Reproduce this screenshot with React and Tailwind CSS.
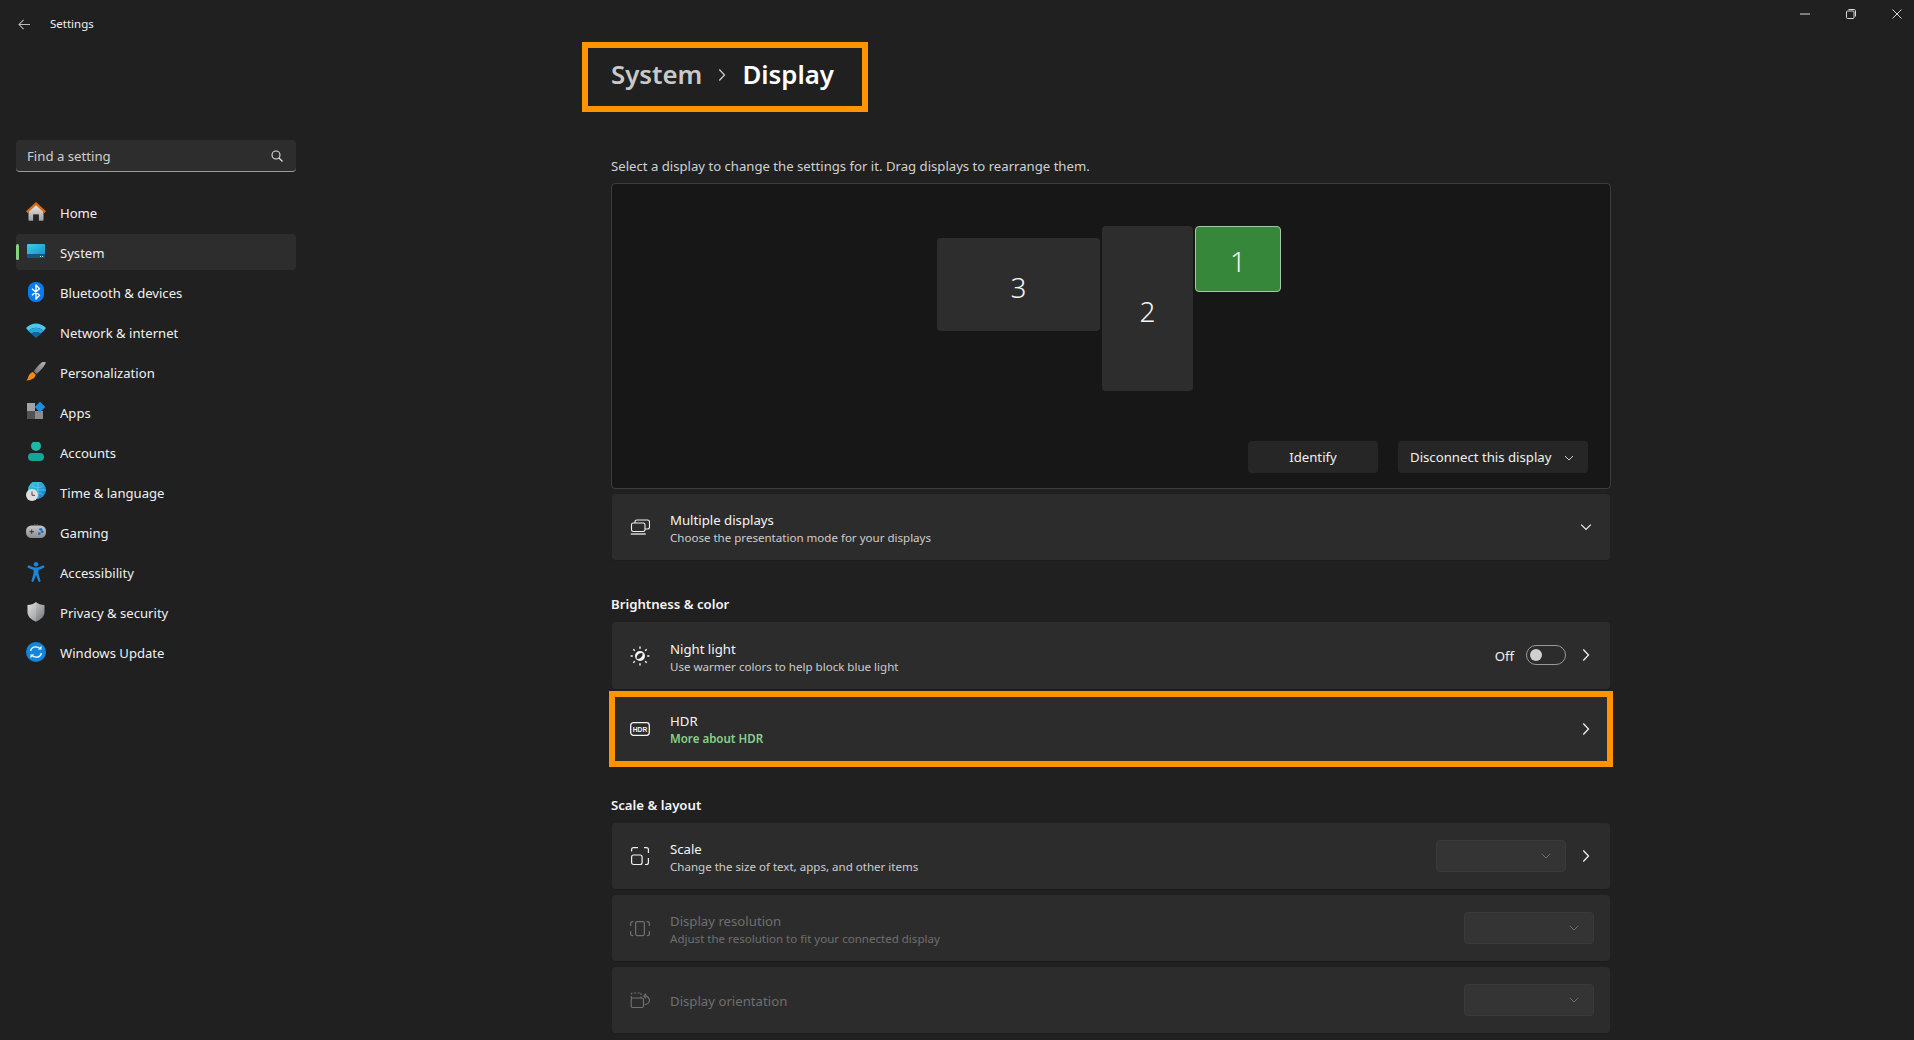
import React from "react";

const nav = [
  ["Home", HomeIcon],
  ["System", SystemIcon],
  ["Bluetooth & devices", BluetoothIcon],
  ["Network & internet", WifiIcon],
  ["Personalization", BrushIcon],
  ["Apps", AppsIcon],
  ["Accounts", AccountIcon],
  ["Time & language", TimeIcon],
  ["Gaming", GameIcon],
  ["Accessibility", AccessIcon],
  ["Privacy & security", ShieldIcon],
  ["Windows Update", UpdateIcon],
];

function Svg({ children, className = "w-5 h-5", vb = "0 0 20 20" }) {
  return (
    <svg viewBox={vb} className={className} fill="none">
      {children}
    </svg>
  );
}

function HomeIcon() {
  return (
    <Svg>
      <defs>
        <linearGradient id="hb" x1="0" y1="0" x2="0" y2="1">
          <stop offset="0" stopColor="#ececec" />
          <stop offset="1" stopColor="#9f9f9f" />
        </linearGradient>
      </defs>
      <path d="M2.500 8.500 10 2l7.500 6.500v9.300a1 1 0 0 1-1 1h-3.700v-6.300H7.200v6.300H3.500a1 1 0 0 1-1-1z" fill="url(#hb)" />
      <path d="M7.200 12.500h5.600v6.300H7.200z" fill="#2a2a2a" opacity=".55" />
      <path d="M0 9.200 10 0l10 9.200-1.500 1.700L10 3.200 1.500 10.900z" fill="#dc6a10" />
    </Svg>
  );
}
function SystemIcon() {
  return (
    <Svg>
      <defs>
        <linearGradient id="sb" x1="0" y1="0" x2="1" y2="1">
          <stop offset="0" stopColor="#38cfe8" />
          <stop offset="1" stopColor="#1a90c8" />
        </linearGradient>
      </defs>
      <rect x="1" y="2" width="18" height="11" rx="1" fill="url(#sb)" />
      <path d="M1 12h18v3a1 1 0 0 1-1 1H2a1 1 0 0 1-1-1z" fill="#14597d" />
      <rect x="14" y="14" width="1" height="1" fill="#bfe6f5" />
      <rect x="16" y="14" width="1" height="1" fill="#bfe6f5" />
    </Svg>
  );
}
function BluetoothIcon() {
  return (
    <Svg>
      <rect x="2" y="0" width="16" height="20" rx="7.500" fill="#0a7bf0" />
      <path d="M6 6.700 13.500 13.300 10 17V3l3.500 3.700L6 13.300" stroke="#fff" strokeWidth="1.400" strokeLinejoin="round" />
    </Svg>
  );
}
function WifiIcon() {
  return (
    <Svg>
      <path d="M0 6C5.500 0 14.500 0 20 6L17.500 9C13 4.800 7 4.800 2.500 9z" fill="#4cc8f0" />
      <path d="M2.500 9C7 4.800 13 4.800 17.500 9L14.800 11.800C12 9.500 8 9.500 5.200 11.800z" fill="#2aa4de" />
      <path d="M5.200 11.800C8 9.500 12 9.500 14.800 11.800L10 16z" fill="#11659f" />
    </Svg>
  );
}
function BrushIcon() {
  return (
    <Svg vb="0 1 20 20">
      <defs>
        <linearGradient id="br" x1="0" y1="1" x2="1" y2="0">
          <stop offset="0" stopColor="#707070" />
          <stop offset="1" stopColor="#b8b8b8" />
        </linearGradient>
      </defs>
      <path d="M17.300.300c1.200-.5 2.700.6 2.300 1.900-1.500 3.500-5.800 8-9 10.800L7.700 10.200C10.500 6.800 14 2 17.300.300z" fill="url(#br)" />
      <path d="M7 11 9.800 13.700c-.6 3-3.500 5.500-9.800 5.800 1.700-1 2-3 2.700-4.800C3.500 13 5 11.500 7 11z" fill="#f28a18" />
    </Svg>
  );
}
function AppsIcon() {
  return (
    <Svg>
      <rect x="1" y="1" width="8" height="8" fill="#a2a2a6" />
      <rect x="1" y="9" width="8" height="8" fill="#505155" />
      <rect x="9" y="9" width="8" height="8" fill="#8a8b8f" />
      <path d="M14 -.3 19.300 5 14 10.300 8.700 5z" fill="#1a8fe3" />
    </Svg>
  );
}
function AccountIcon() {
  return (
    <Svg>
      <circle cx="10" cy="4" r="5" fill="#1fb5a8" />
      <rect x="2" y="11" width="16" height="8" rx="4" fill="#14a598" />
    </Svg>
  );
}
function TimeIcon() {
  return (
    <Svg>
      <defs>
        <linearGradient id="gl" x1="0" y1="0" x2="1" y2="1">
          <stop offset="0" stopColor="#3fd2e0" />
          <stop offset="1" stopColor="#1379c9" />
        </linearGradient>
      </defs>
      <circle cx="11" cy="8" r="9" fill="url(#gl)" />
      <path d="M3 8h17M12 0v17M6 3.500c3 3 8 3 11 0M7 13c3-2.500 7-2.500 10 0" stroke="#8adfee" strokeWidth=".5" />
      <circle cx="6" cy="13" r="6" fill="#dedede" />
      <path d="M6 9.500v3.800h3" stroke="#444" strokeWidth="1" />
    </Svg>
  );
}
function GameIcon() {
  return (
    <Svg>
      <defs>
        <linearGradient id="gm" x1="0" y1="0" x2="0" y2="1">
          <stop offset="0" stopColor="#c5c6c9" />
          <stop offset="1" stopColor="#8b8c91" />
        </linearGradient>
      </defs>
      <rect x="0" y="3.500" width="20" height="12.500" rx="5.500" fill="url(#gm)" />
      <path d="M3.500 9.700h4.500M5.700 7.500v4.400" stroke="#333" strokeWidth="1" />
      <circle cx="14.700" cy="7.300" r="1.400" fill="#1a70c4" />
      <circle cx="16.200" cy="9.700" r="1.400" fill="#1a70c4" />
      <circle cx="13.300" cy="11.700" r="1.400" fill="#1a70c4" />
      <path d="M8.500 2.500h.8M10.700 2.500h.8" stroke="#777" />
    </Svg>
  );
}
function AccessIcon() {
  return (
    <Svg>
      <circle cx="10" cy="2.300" r="2.200" fill="#1b86de" />
      <path d="M2 3.800c-1.200 1 .2 2.200 1 2.400L7.600 8v3.500L5.500 18.500c-.3 1.500 1.700 2 2.200.6L10 13l2.300 6.100c.5 1.400 2.500.9 2.200-.6l-2.100-7V8l4.600-1.800c.8-.2 2.200-1.400 1-2.400-1-.8-2.200.2-3.500.7C12.800 5.200 11.500 5.500 10 5.500S7.200 5.200 5.500 4.500C4.200 4 3 3 2 3.800z" fill="#1b86de" />
    </Svg>
  );
}
function ShieldIcon() {
  return (
    <Svg>
      <defs>
        <linearGradient id="sh" x1="0" y1="0" x2="1" y2="1">
          <stop offset="0" stopColor="#dadadb" />
          <stop offset=".5" stopColor="#a9aaad" />
          <stop offset="1" stopColor="#6f7074" />
        </linearGradient>
      </defs>
      <path d="M10 0c2 2 5 3 8.500 3v7c0 4.500-3.500 7.500-8.500 9.700C5 17.500 1.500 14.500 1.500 10V3C5 3 8 2 10 0z" fill="url(#sh)" />
      <path d="M10 0v19.700C5 17.500 1.500 14.500 1.500 10V3C5 3 8 2 10 0z" fill="#fff" opacity=".15" />
    </Svg>
  );
}
function UpdateIcon() {
  return (
    <Svg>
      <circle cx="10" cy="10" r="10" fill="#1285de" />
      <path d="M4.500 9c.6-2.700 2.800-4.200 5.500-4.200 1.800 0 3.200.7 4.300 2" stroke="#fff" strokeWidth="1.300" />
      <path d="M15.500 3.800v3.700h-3.700z" fill="#fff" />
      <path d="M15.500 11c-.6 2.700-2.800 4.200-5.500 4.200-1.800 0-3.200-.7-4.300-2" stroke="#fff" strokeWidth="1.300" />
      <path d="M4.500 16.200v-3.700h3.700z" fill="#fff" />
    </Svg>
  );
}

function Chevron({ className = "" }) {
  return (
    <svg viewBox="0 0 8 14" className={`w-2 h-3.5 ${className}`} fill="none">
      <path d="M1.300 1.500 6.500 7l-5.200 5.500" stroke="currentColor" strokeWidth="1.300" />
    </svg>
  );
}
function Down({ className = "" }) {
  return (
    <svg viewBox="0 0 10 6" className={`w-2.5 h-1.5 ${className}`} fill="none">
      <path d="M1 1l4 4 4-4" stroke="currentColor" strokeWidth="1" />
    </svg>
  );
}

function MultiIcon() {
  return (
    <Svg>
      <path d="M5 6V5c0-1.200.8-2 2-2h10.500c1.200 0 2 .8 2 2v5c0 1.200-.8 2-2 2H15" stroke="#f0f0f0" strokeWidth="1.100" />
      <rect x="1.500" y="6" width="13.500" height="8.500" rx="1.700" stroke="#f0f0f0" strokeWidth="1.100" />
      <path d="M.8 17h15" stroke="#f0f0f0" strokeWidth="1.300" />
    </Svg>
  );
}
function SunIcon() {
  return (
    <Svg>
      <circle cx="10" cy="10" r="5" fill="#f4f4f4" />
      <path d="M6.800 12.800c2.800.8 6-1.600 5.800-5.200-.3-.3-.6-.5-1-.6-3 .1-5.400 2.800-4.800 5.800z" fill="#2c2c2c" />
      <path d="M10 .6v2.200M10 17.200v2.200M.6 10h2.200M17.200 10h2.200M3.300 3.300l1.500 1.500M15.200 15.200l1.500 1.500M3.300 16.700l1.500-1.500M15.200 4.800l1.500-1.500" stroke="#f4f4f4" strokeWidth="1.400" />
    </Svg>
  );
}
function HdrIcon() {
  return (
    <svg viewBox="0 0 20 14" className="w-5 h-3.5" fill="none">
      <rect x=".7" y=".7" width="18.600" height="12.600" rx="2.700" stroke="#f4f4f4" strokeWidth="1.300" />
      <text x="10" y="9.800" textAnchor="middle" fill="#f4f4f4" fontFamily="'Liberation Sans', sans-serif" fontWeight="700" fontSize="7.500" textLength="14.500" lengthAdjust="spacingAndGlyphs">
        HDR
      </text>
    </svg>
  );
}
function ScaleIcon() {
  return (
    <Svg>
      <rect x="1.600" y="9" width="10.500" height="9.500" rx="2" stroke="#f0f0f0" strokeWidth="1.200" />
      <path d="M1.600 5.500V3.600c0-1.200.8-2 2-2H8M14 1.600h2.400c1.200 0 2 .8 2 2V7M18.400 12v4.500c0 1.200-.8 2-2 2H15" stroke="#f0f0f0" strokeWidth="1.200" />
    </Svg>
  );
}
function ResIcon() {
  return (
    <Svg>
      <rect x="5.600" y="3.600" width="8.800" height="14" rx="1.800" stroke="#707070" strokeWidth="1.200" />
      <path d="M3.200 3.600h-.7C1.300 3.600.6 4.300.6 5.500V8M.6 13v2.700c0 1.200.7 1.900 1.900 1.900h.7M16.800 3.600h.7c1.200 0 1.900.7 1.900 1.900V8M19.400 13v2.700c0 1.200-.7 1.900-1.900 1.900h-.7" stroke="#707070" strokeWidth="1.200" />
    </Svg>
  );
}
function OrientIcon() {
  return (
    <Svg>
      <path d="M1.200 8V4.500c0-1 .5-1.500 1.500-1.500H11M11 3v5" stroke="#707070" strokeWidth="1.200" strokeDasharray="2 1.500" />
      <rect x="1.200" y="8" width="12.300" height="9.500" rx="1.500" stroke="#707070" strokeWidth="1.200" />
      <path d="M14 6c3-.4 5.400 1.400 5.400 4.200S17 14.500 14.500 14.500" stroke="#707070" strokeWidth="1.200" />
      <path d="M16.200 3.800 13.800 6l2.400 2.200" stroke="#707070" strokeWidth="1.200" />
    </Svg>
  );
}

function RowText({ title, sub, disabled, link, pad = "pt-[3px]" }) {
  return (
    <div className={`flex flex-col ml-5 ${pad}`}>
      <span className={`text-[13.2px] leading-[18px] ${disabled ? "text-[#6f6f6f]" : "text-[#f5f5f5]"}`}>{title}</span>
      {sub && (
        <span
          className={`text-[11.55px] leading-[18px] ${
            link ? "text-[#8ad08a] font-semibold" : disabled ? "text-[#6f6f6f]" : "text-[#cdcdcd]"
          }`}
        >
          {sub}
        </span>
      )}
    </div>
  );
}

function Row({ icon, children, right, className = "" }) {
  return (
    <div className={`h-[67px] rounded bg-[#2c2c2c] border-b border-[#1c1c1c] flex items-center pl-[18px] ${className}`}>
      {icon}
      {children}
      <div className="ml-auto flex items-center">{right}</div>
    </div>
  );
}

function Select({ className = "" }) {
  return (
    <div className={`w-[130px] h-8 rounded bg-[#343434] border border-[#3a3a3a] flex items-center justify-end pr-[14px] text-[#6d6d6d] ${className}`}>
      <Down />
    </div>
  );
}

function Monitor({ n, className, active }) {
  return (
    <div
      className={`absolute rounded flex items-center justify-center text-[28px] font-light text-[#f5f5f5] ${
        active ? "bg-[#36873a] border border-[#a5c9a6]" : "bg-[#2d2d2d]"
      } ${className}`}
    >
      {n}
    </div>
  );
}

export default function App() {
  return (
    <div className="relative flex h-[1040px] w-full overflow-hidden bg-[#202020] font-['Noto_Sans',sans-serif] text-[#f2f2f2]">
      <aside className="w-[280px] ml-4 shrink-0 flex flex-col">
        <div className="h-[48px] flex items-center">
          <svg viewBox="0 0 14 12" className="w-[13px] h-[11px] ml-0.5 text-[#bdbdbd]" fill="none">
            <path d="M13 6H1.200M6 1 1 6l5 5" stroke="currentColor" strokeWidth="1.100" />
          </svg>
          <span className="ml-[19px] text-[11.5px] text-[#f0f0f0]">Settings</span>
        </div>
        <div className="mt-[92px] h-8 rounded bg-[#2d2d2d] border-b border-[#9c9c9c] flex items-center pl-[11px] pr-[13px]">
          <span className="text-[13.2px] text-[#cfcfcf] pt-[2px]">Find a setting</span>
          <svg viewBox="0 0 12 12" className="ml-auto w-3 h-3" fill="none">
            <circle cx="5" cy="5" r="4" stroke="#e0e0e0" strokeWidth="1.100" />
            <path d="M8 8l3.500 3.500" stroke="#e0e0e0" strokeWidth="1.200" />
          </svg>
        </div>
        <nav className="mt-[22px] flex flex-col gap-1">
          {nav.map(([label, Icon]) => (
            <div
              key={label}
              className={`relative h-9 flex items-center rounded pl-[10px] ${label === "System" ? "bg-[#2d2d2d]" : ""}`}
            >
              {label === "System" && <span className="absolute left-0 top-[10px] h-4 w-[3px] rounded bg-[#86cf83]" />}
              <Icon />
              <span className="ml-[14px] pt-[3px] text-[13.1px] text-[#f0f0f0]">{label}</span>
            </div>
          ))}
        </nav>
      </aside>

      <main className="ml-[316px] w-[998px] shrink-0 pt-[42px]">
        <div className="-ml-[30px] w-[286px] h-[70px] border-[6px] border-[#ff9300] flex items-center pl-[23px] pb-[5px] text-[25.8px] font-semibold leading-none">
          <span className="text-[#c9c9c9]">System</span>
          <Chevron className="mx-[16px] text-[#c9c9c9]" />
          <span className="text-white">Display</span>
        </div>

        <p className="mt-[44px] -ml-px text-[13.15px] leading-5 text-[#d0d0d0]">
          Select a display to change the settings for it. Drag displays to rearrange them.
        </p>

        <div className="relative -mx-px mt-[7px] h-[306px] rounded bg-[#171717] border border-[#3c3c3c]">
          <Monitor n="3" className="left-[325px] top-[54px] w-[163px] h-[93px] pt-[5px]" />
          <Monitor n="2" className="left-[490px] top-[42px] w-[91px] h-[165px] pt-[5px]" />
          <Monitor n="1" active className="left-[583px] top-[42px] w-[86px] h-[66px] pt-[4px]" />
          <div className="absolute right-[22px] bottom-[15px] flex gap-[20px] text-[13.2px] text-[#f0f0f0]">
            <div className="w-[130px] h-8 rounded bg-[#262626] flex items-center justify-center pt-px">Identify</div>
            <div className="w-[190px] h-8 rounded bg-[#262626] flex items-center justify-between pl-3 pr-[14px] pt-px">
              Disconnect this display
              <Down className="text-[#cfcfcf]" />
            </div>
          </div>
        </div>

        <Row
          className="mt-[5px]"
          icon={<MultiIcon />}
          right={<Down className="mr-[18px] w-3 h-2 text-[#f0f0f0]" />}
        >
          <RowText title="Multiple displays" sub="Choose the presentation mode for your displays" />
        </Row>

        <h2 className="mt-[33px] -ml-px text-[13.2px] leading-5 font-semibold text-[#f5f5f5]">Brightness &amp; color</h2>

        <Row
          className="mt-2 !h-[68px]"
          icon={<SunIcon />}
          right={
            <>
              <span className="text-[13.2px] text-[#f0f0f0] mr-3 pt-[3px]">Off</span>
              <div className="w-10 h-5 rounded-full border border-[#9a9a9a] flex items-center pl-[3px]">
                <span className="w-3 h-3 rounded-full bg-[#d0d0d0]" />
              </div>
              <Chevron className="ml-4 mr-5 text-[#f0f0f0]" />
            </>
          }
        >
          <RowText title="Night light" sub="Use warmer colors to help block blue light" pad="pt-[5px]" />
        </Row>

        <div className="-mx-[3px] mt-px h-[76px] border-[6px] border-[#ff9300] bg-[#2c2c2c] flex items-center pl-[15px]">
          <HdrIcon />
          <RowText title="HDR" sub="More about HDR" link pad="pt-[1px]" />
          <Chevron className="ml-auto mr-[17px] text-[#f0f0f0]" />
        </div>

        <h2 className="mt-[28px] -ml-px text-[13.2px] leading-5 font-semibold text-[#f5f5f5]">Scale &amp; layout</h2>

        <Row
          className="mt-2"
          icon={<ScaleIcon />}
          right={
            <>
              <Select />
              <Chevron className="ml-4 mr-5 text-[#f0f0f0]" />
            </>
          }
        >
          <RowText title="Scale" sub="Change the size of text, apps, and other items" />
        </Row>

        <Row className="mt-[5px]" icon={<ResIcon />} right={<Select className="mr-4" />}>
          <RowText title="Display resolution" sub="Adjust the resolution to fit your connected display" disabled />
        </Row>

        <Row className="mt-[5px]" icon={<OrientIcon />} right={<Select className="mr-4" />}>
          <RowText title="Display orientation" disabled pad="pt-[1px]" />
        </Row>
      </main>

      <div className="absolute right-0 top-0 flex h-7 items-center text-[#d8d8d8]">
        <div className="w-[46px] flex justify-center">
          <svg viewBox="0 0 10 2" className="w-2.5 h-0.5"><path d="M0 1h10" stroke="currentColor" strokeWidth="1" /></svg>
        </div>
        <div className="w-[46px] flex justify-center">
          <svg viewBox="0 0 10 10" className="w-2.5 h-2.5" fill="none"><rect x=".5" y="2" width="7.500" height="7.500" rx="1" stroke="currentColor" /><path d="M2.500.5H8c1 0 1.500.5 1.500 1.500v5.500" stroke="currentColor" /></svg>
        </div>
        <div className="ml-[6px] w-[34px] flex justify-center">
          <svg viewBox="0 0 10 10" className="w-2.5 h-2.5" fill="none"><path d="M.5.5l9 9M9.500.5l-9 9" stroke="currentColor" /></svg>
        </div>
      </div>
    </div>
  );
}
